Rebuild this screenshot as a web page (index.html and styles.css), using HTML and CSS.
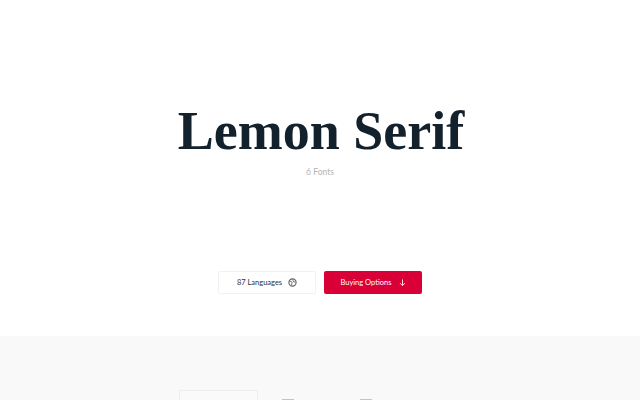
FILE: index.html
```html
<!DOCTYPE html>
<html lang="en">
<head>
<meta charset="utf-8">
<title>Lemon Serif</title>
<link rel="stylesheet" href="styles.css">
</head>
<body>
<section class="hero">
  <h1 class="title">Lemon Serif</h1>
  <p class="count">6 Fonts</p>
  <div class="actions">
    <a class="btn btn-light">87 Languages
      <svg class="icon" width="9" height="9" viewBox="0 0 10 10"><circle cx="5" cy="5" r="4" fill="none" stroke="#666" stroke-width="1.3"/><path d="M2 3.5 L4.5 4.5 L4 8.5 M5 1.5 L6.5 4.5 L8.5 4.5" fill="none" stroke="#777" stroke-width="1.1"/></svg>
    </a>
    <a class="btn btn-red">Buying Options
      <svg class="icon" width="7" height="7" viewBox="0 0 8 8"><path d="M4 .5 V7.5 M1.2 4.7 L4 7.5 L6.8 4.7" fill="none" stroke="#fff" stroke-width="1"/></svg>
    </a>
  </div>
</section>
<section class="lower">
  <div class="tabs">
    <div class="tab tab-active"><span class="glyph dark"></span></div>
    <div class="tab tab-second"><span class="glyph"></span></div>
    <div class="tab tab-third"><span class="glyph"></span></div>
  </div>
</section>
</body>
</html>
```
FILE: styles.css
```css
html, body { margin: 0; padding: 0; height: 400px; overflow: hidden; background: #fff; }
body { font-family: Lato, "Noto Sans", sans-serif; }
.hero { height: 336px; display: flex; flex-direction: column; align-items: center; box-sizing: border-box; padding-top: 99px; }
.title { margin: 0 0 0 2px; font-family: "Liberation Serif", serif; font-weight: 700; font-size: 54px; line-height: 64px; color: #13212d; }
.count { margin: 3px 0 0; font-size: 8.5px; line-height: 12px; color: #b4b4b4; }
.actions { display: flex; gap: 8px; margin-top: 93px; }
.btn { height: 23px; width: 98px; box-sizing: border-box; border-radius: 2px; display: flex; align-items: center; justify-content: center; font-size: 7.5px; }
.btn-light { border: 1px solid #f2f2f2; color: #333; gap: 6px; }
.btn-red { background: #d80036; color: #fff; gap: 7px; }
.lower { height: 64px; overflow: hidden; background: #f9f9f9; display: flex; justify-content: center; }
.tabs { display: flex; margin-top: 54px; width: 282px; }
.tab { height: 40px; box-sizing: border-box; display: flex; padding-top: 9px; }
.tab-active { width: 79px; padding-left: 14px; background: #fafafa; border: 1px solid #eee; border-radius: 2px; }
.tab-second { width: 78px; padding-left: 24px; }
.tab-third { width: 78px; padding-left: 24px; }
.glyph { width: 12px; height: 2px; background: #c4c4c4; }
.glyph.dark { background: #666; }
```
